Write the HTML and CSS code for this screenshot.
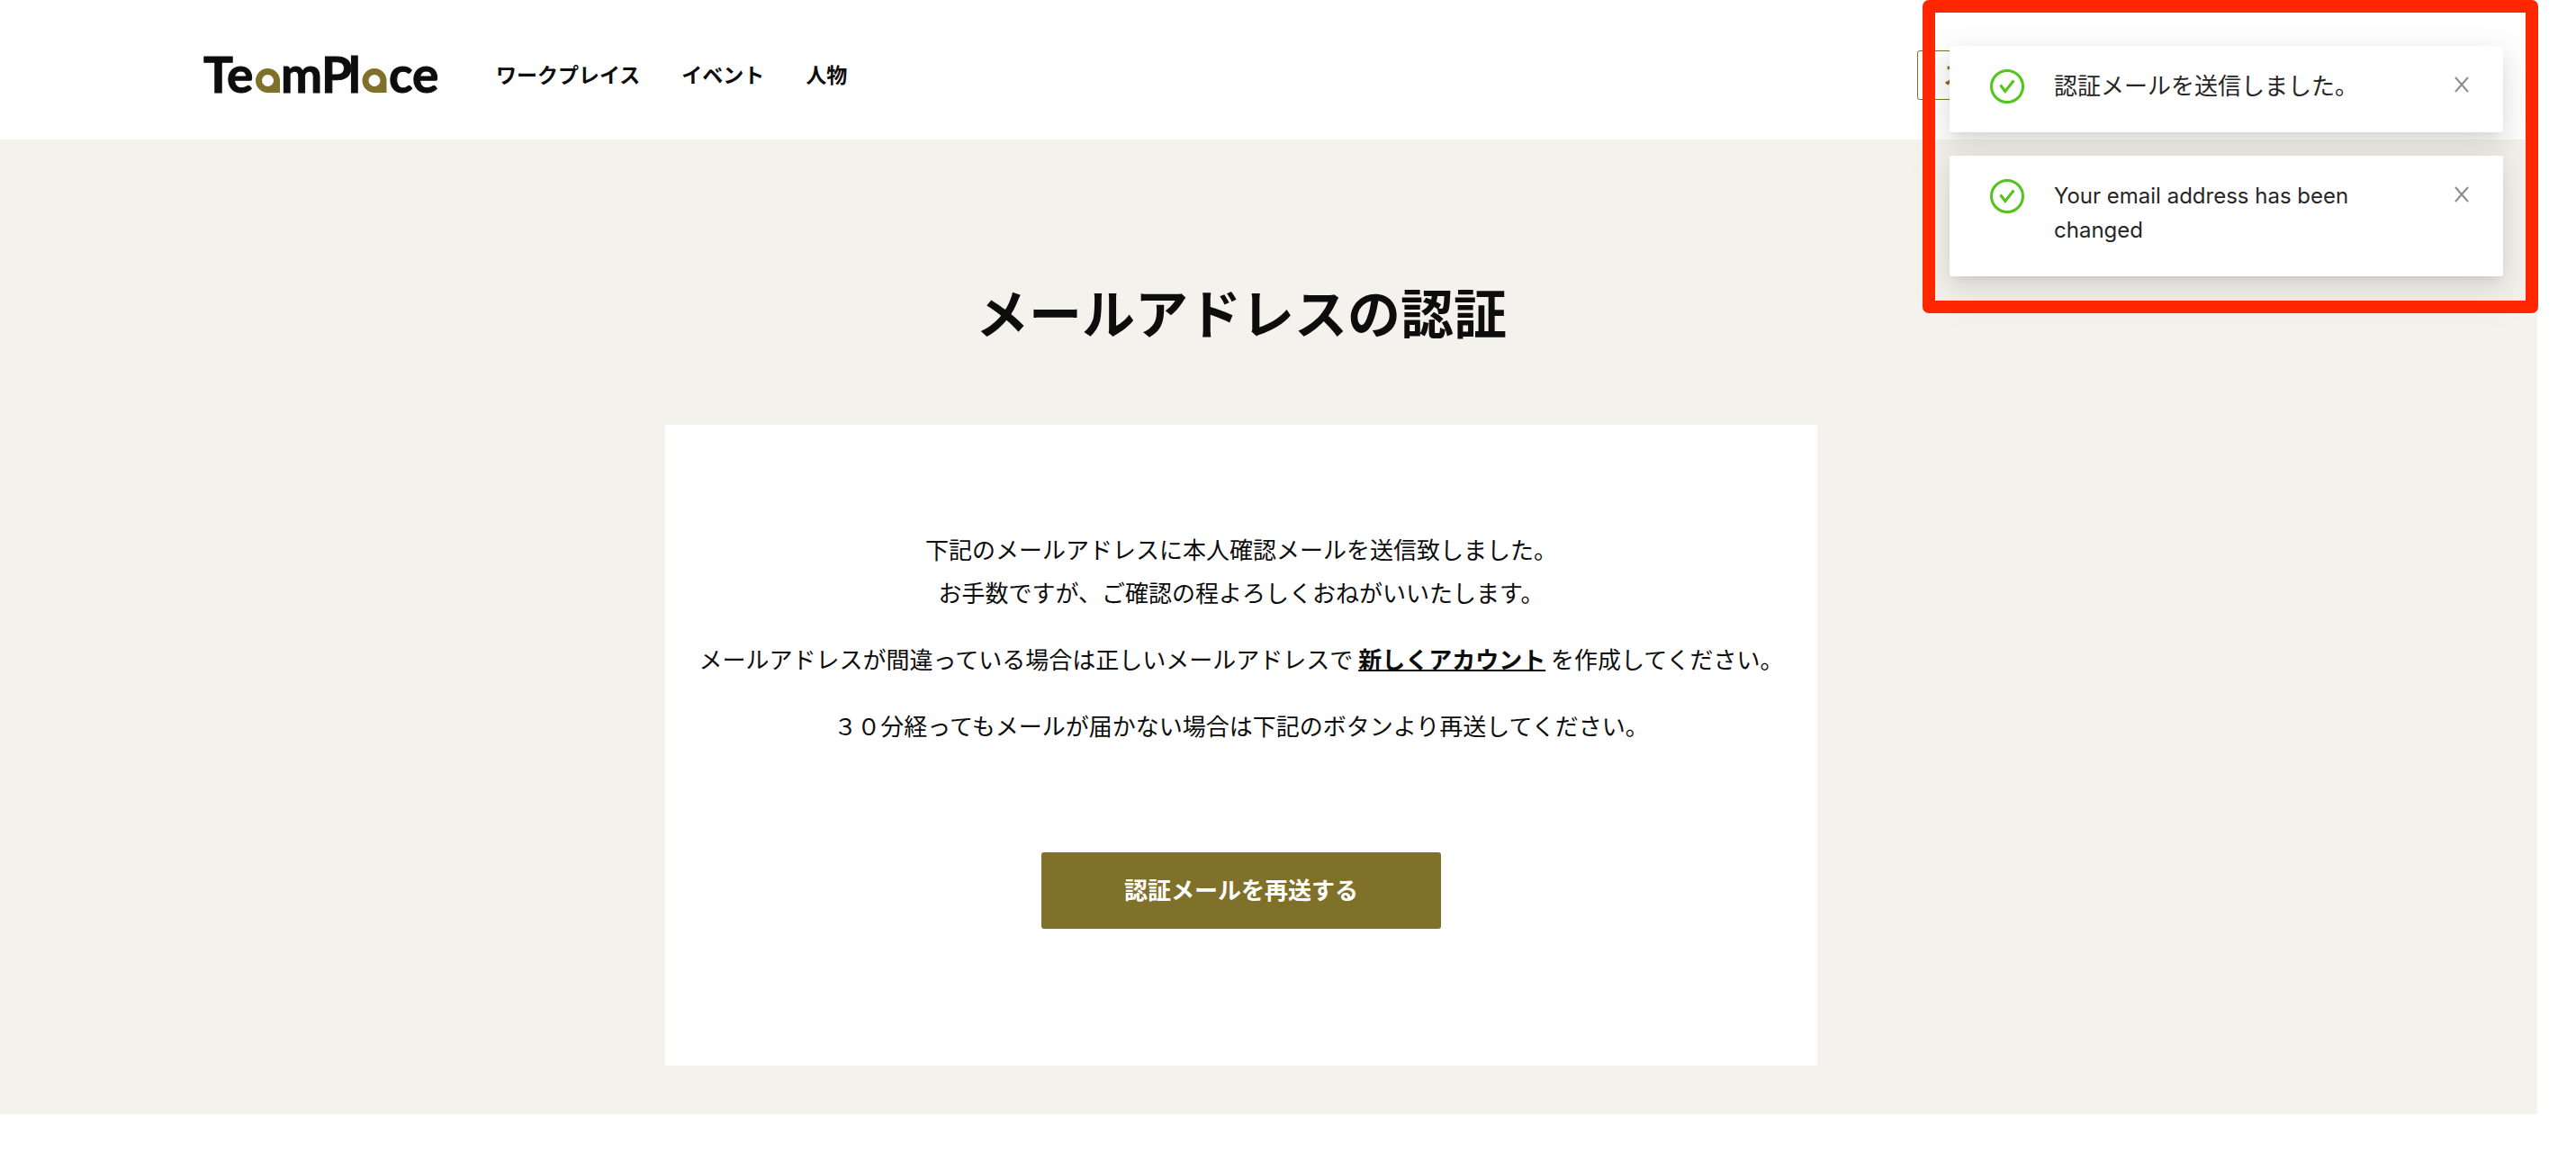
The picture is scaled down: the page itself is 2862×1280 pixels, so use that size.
FILE: index.html
```html
<!DOCTYPE html>
<html lang="ja">
  <head>
    <meta charset="UTF-8">
    <meta name="viewport" content="width=device-width, initial-scale=1">
    <title>メールアドレスの認証 | TeamPlace</title>
    <link rel="stylesheet" href="styles.css">
  </head>
  <body>
    <header class="header">
      <a class="logo" href="#" aria-label="TeamPlace">
        <svg width="260" height="42" viewBox="0 0 260 42">
          <text class="logo-text" y="40" x="-1 25">Te</text>
          <path class="logo-mark" fill-rule="evenodd" d="M70.500 13a13.500 13.500 0 1 0 0 27H84V26.500A13.500 13.500 0 0 0 70.500 13zm0 7a6.500 6.500 0 1 1 0 13 6.500 6.500 0 0 1 0-13z"/>
          <text class="logo-text" y="40" x="85 130 160">mPl</text>
          <path class="logo-mark" fill-rule="evenodd" d="M189 13a13.500 13.500 0 1 0 0 27h13.500V26.500A13.500 13.500 0 0 0 189 13zm0 7a6.500 6.500 0 1 1 0 13 6.500 6.500 0 0 1 0-13z"/>
          <text class="logo-text" y="40" x="205 231">ce</text>
        </svg>
      </a>
      <nav class="nav">
        <a href="#">ワークプレイス</a>
        <a href="#">イベント</a>
        <a href="#">人物</a>
      </nav>
      <div class="header-actions">
        <button class="btn-outline" type="button">ス</button>
      </div>
    </header>

    <main class="main">
      <h1 class="title">メールアドレスの認証</h1>
      <section class="card">
        <p>下記のメールアドレスに本人確認メールを送信致しました。<br>お手数ですが、ご確認の程よろしくおねがいいたします。</p>
        <p>メールアドレスが間違っている場合は正しいメールアドレスで <a href="#">新しくアカウント</a> を作成してください。</p>
        <p>３０分経ってもメールが届かない場合は下記のボタンより再送してください。</p>
        <button class="btn-primary" type="button">認証メールを再送する</button>
      </section>
    </main>

    <!-- notifications -->
    <div class="notices">
      <div class="notice" role="status">
        <svg class="notice-icon" viewBox="0 0 38 38">
          <circle cx="19" cy="19" r="17.500"/>
          <path d="M11.500 17.500l5.300 7 9.500-12"/>
        </svg>
        <div class="notice-text">認証メールを送信しました。</div>
        <button class="notice-close" type="button" aria-label="閉じる">
          <svg viewBox="0 0 16 18"><path d="M1 1l14 16M15 1L1 17"/></svg>
        </button>
      </div>
      <div class="notice" role="status">
        <svg class="notice-icon" viewBox="0 0 38 38">
          <circle cx="19" cy="19" r="17.500"/>
          <path d="M11.500 17.500l5.300 7 9.500-12"/>
        </svg>
        <div class="notice-text" lang="en">Your email address has been changed</div>
        <button class="notice-close" type="button" aria-label="閉じる">
          <svg viewBox="0 0 16 18"><path d="M1 1l14 16M15 1L1 17"/></svg>
        </button>
      </div>
    </div>
  </body>
</html>
```

FILE: styles.css
```css
:root {
  --text: #0d0d0d;
  --olive: #80712a;
  --beige: #f3f2ec;
}

* {
  box-sizing: border-box;
}

body {
  margin: 0 43px 0 0;
  font-family: "Noto Sans CJK JP", sans-serif;
  font-size: 26px;
  line-height: 48px;
  color: var(--text);
  background: #fff;
}

button {
  font-family: inherit;
  cursor: pointer;
}

.header {
  display: flex;
  align-items: center;
  padding: 56px 288px 44px 227px;
}

.logo {
  display: flex;
}

.logo svg {
  display: block;
  overflow: visible;
}

.logo-text {
  font-family: Lato, sans-serif;
  font-size: 55px;
  font-weight: 700;
  fill: var(--text);
  stroke: var(--text);
  stroke-width: 1;
}

.logo-mark {
  fill: var(--olive);
}

.nav {
  display: flex;
  gap: 46px;
  margin-left: 64px;
  padding-bottom: 4px;
}

.nav a {
  font-size: 23px;
  font-weight: 700;
  color: var(--text);
  text-decoration: none;
}

.header-actions {
  width: 401px;
  margin-left: auto;
}

.btn-outline {
  display: block;
  min-width: 200px;
  height: 55px;
  padding: 0 28px 4px;
  border: 1px solid var(--olive);
  border-radius: 3px;
  background: #fff;
  font-size: 26px;
  font-weight: 700;
  text-align: left;
  color: var(--olive);
}

.main {
  padding: 146px 61px 54px 0;
  background: var(--beige);
}

.title {
  margin: 0 0 81px;
  font-size: 59px;
  line-height: 90px;
  font-weight: 700;
  text-align: center;
}

.card {
  max-width: 1280px;
  margin: 0 auto;
  padding: 114px 24px 152px;
  background: #fff;
  text-align: center;
}

.card p {
  margin: 0 0 26px;
}

.card a {
  font-weight: 700;
  color: var(--text);
  text-decoration-thickness: 2px;
}

.btn-primary {
  display: block;
  width: 444px;
  height: 85px;
  margin: 117px auto 0;
  padding: 0 0 4px;
  border: 0;
  border-radius: 3px;
  background: var(--olive);
  font-size: 26px;
  font-weight: 700;
  color: #fff;
}

/* notifications */
.notices {
  position: absolute;
  top: 0;
  right: 42px;
  display: flex;
  flex-direction: column;
  gap: 26px;
  width: 684px;
  padding: 51px 39px 41px 30px;
}

.notices::after {
  content: "";
  position: absolute;
  inset: 0;
  border: 14px solid #ff2600;
  border-radius: 7px;
  pointer-events: none;
}

.notice {
  display: flex;
  align-items: flex-start;
  padding: 26px 38px 32px 45px;
  border-radius: 3px;
  background: #fff;
  box-shadow: 0 5px 10px -6px rgba(0, 0, 0, .12), 0 10px 26px 0 rgba(0, 0, 0, .08), 0 14px 45px 13px rgba(0, 0, 0, .05);
}

.notice-icon {
  flex: none;
  width: 38px;
  height: 38px;
  fill: none;
  stroke: #52c41a;
  stroke-width: 3;
}

.notice-text {
  flex: 1;
  margin: 0 60px 0 33px;
  font-family: Inter, "Noto Sans CJK JP", sans-serif;
  font-size: 26px;
  line-height: 38px;
  color: #262626;
}

.notice-text:lang(en) {
  font-size: 24px;
}

.notice-close {
  display: flex;
  padding: 8px 0 8px 8px;
  border: 0;
  background: none;
}

.notice-close svg {
  width: 16px;
  height: 18px;
  fill: none;
  stroke: #8c8c8c;
  stroke-width: 2;
}
```
